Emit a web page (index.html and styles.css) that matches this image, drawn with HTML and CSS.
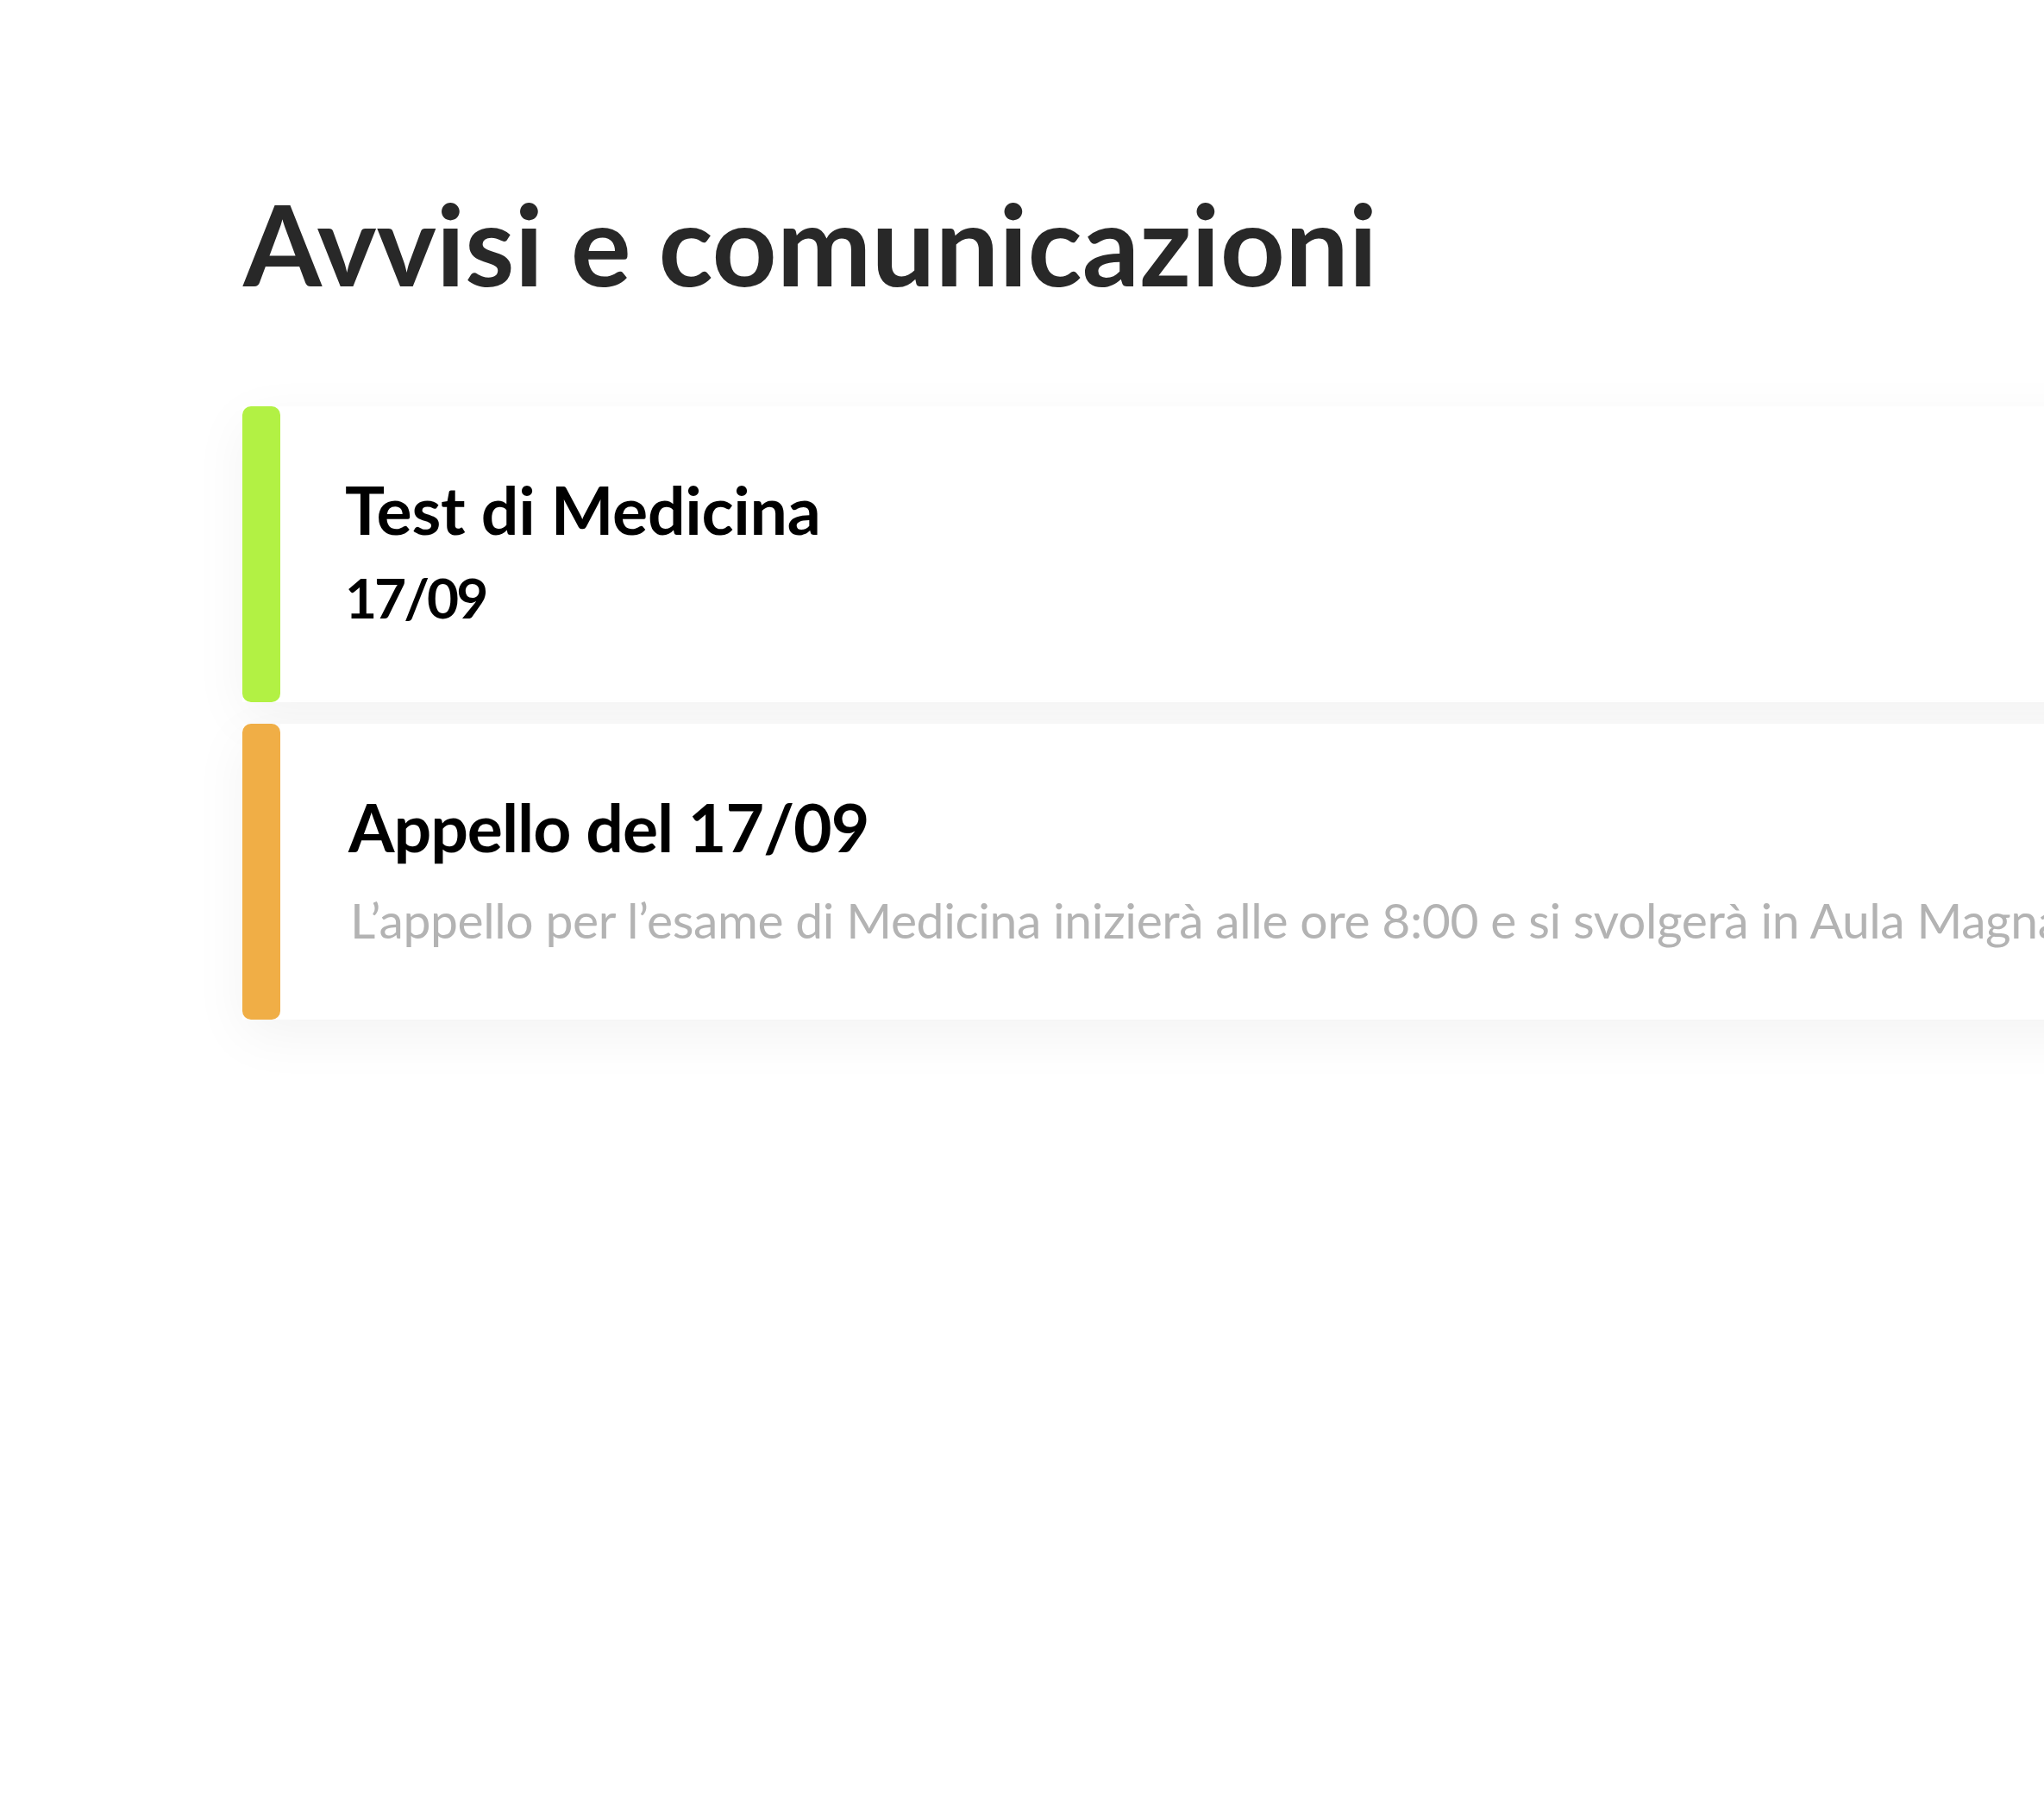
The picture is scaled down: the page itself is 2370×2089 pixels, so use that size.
FILE: index.html
```html
<!DOCTYPE html>
<html lang="it">
<head>
    <meta charset="UTF-8">
    <meta name="viewport" content="width=device-width, initial-scale=1.0">
    <title>Avvisi e comunicazioni</title>
    <link rel="stylesheet" href="styles.css">
</head>
<body>

    <section class="notices">
        <h1>Avvisi e comunicazioni</h1>

        <div class="notice-list">
            <div class="notice">
                <div class="notice-bar green"></div>
                <div class="notice-body">
                    <h3>Test di Medicina</h3>
                    <p class="notice-date">17/09</p>
                </div>
            </div>

            <div class="notice">
                <div class="notice-bar orange"></div>
                <div class="notice-body">
                    <h3 class="shifted">Appello del 17/09</h3>
                    <p class="notice-text">L’appello per l’esame di Medicina inizierà alle ore 8:00 e si svolgerà in Aula Magna.</p>
                </div>
            </div>
        </div>
    </section>

</body>
</html>
```

FILE: styles.css
```css
html, body {
    overflow-x: hidden;
}
body {
    font-family: Lato, 'Noto Sans', sans-serif;
    margin: 0;
    padding: 0;
    background-color: #ffffff;
    min-height: 100vh;
}
.notices {
    padding: 203px 0 0 281px;
}
.notices h1 {
    margin: 0 0 0 1px;
    font-size: 131px;
    font-weight: 700;
    line-height: 1.2;
    color: #282828;
    letter-spacing: 0;
}
.notice-list {
    margin-top: 111px;
    width: 2300px;
    display: flex;
    flex-direction: column;
    gap: 25px;
}
.notice {
    display: flex;
    height: 343px;
    box-shadow: 0 18px 60px rgba(0, 0, 0, 0.05);
}
.notice-bar {
    width: 44px;
    flex-shrink: 0;
    border-radius: 10px;
}
.notice-bar.green { background-color: #b2f144; }
.notice-bar.orange { background-color: #f0ae46; }
.notice-body {
    flex-grow: 1;
    background-color: #ffffff;
    padding: 73px 0 0 75px;
    white-space: nowrap;
    overflow: hidden;
}
.notice-body h3 {
    margin: 0;
    font-size: 77px;
    font-weight: 700;
    line-height: 1.2;
    color: #000000;
    letter-spacing: -0.3px;
}
.notice-body h3.shifted {
    margin-left: 4px;
    letter-spacing: -1px;
}
.notice-date {
    margin: 18px 0 0 0;
    font-size: 64px;
    font-weight: 700;
    line-height: 1.2;
    color: #000000;
    letter-spacing: -3px;
}
.notice-text {
    margin: 27px 0 0 6px;
    font-size: 57px;
    font-weight: 400;
    line-height: 1.2;
    color: #b3b3b3;
    letter-spacing: -0.4px;
}
```
